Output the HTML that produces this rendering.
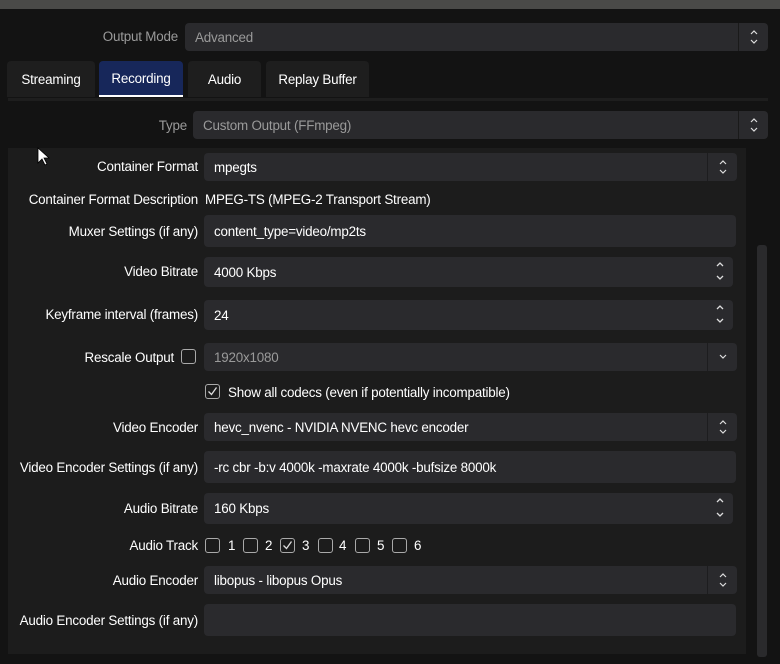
<!DOCTYPE html>
<html><head><meta charset="utf-8"><style>
*{box-sizing:border-box;margin:0;padding:0}
body{width:780px;height:664px;background:#131313;font-family:"Liberation Sans",sans-serif;font-size:13.4px;color:#fff;position:relative;overflow:hidden;letter-spacing:-0.2px}
div{position:absolute}
.top{left:0;top:0;width:780px;height:9px;background:#4a4a48}
.f{background:#2a2a2d;border-radius:4px;padding-left:10px;display:flex;align-items:center}
.lbl{text-align:right;white-space:nowrap}
.dim{color:#9a9a9a}
.sp{right:0;top:0;bottom:0;width:30px;border-left:1px solid #1d1d1f}
.tab{top:61px;height:36px;background:#1e1e1e;border-radius:4px 4px 0 0;display:flex;align-items:center;justify-content:center;font-size:13.4px}
.cb{width:15px;height:15px;border:1.5px solid #aaa;border-radius:3px}
svg{position:absolute}
</style></head><body>
<div class="top"></div>

<div class="lbl dim" style="right:602px;top:29px">Output Mode</div>
<div class="f dim" style="left:185px;top:23px;width:583px;height:28px">Advanced<div class="sp" style="border-left-color:#1a1a1a"><svg width="30" height="28"><path d="M12 11l3-3 3 3M12 17l3 3 3-3" stroke="#ddd" fill="none" stroke-width="1.2"/></svg></div></div>

<div class="tab" style="left:7px;width:88px">Streaming</div>
<div class="tab" style="left:99px;width:84px;background:#17275a;border-bottom:2px solid #fff">Recording</div>
<div class="tab" style="left:188px;width:73px">Audio</div>
<div class="tab" style="left:266px;width:103px">Replay Buffer</div>
<div style="left:8px;top:98px;width:760px;height:3px;background:#1e1e1e"></div>

<div class="lbl dim" style="right:593px;top:118px">Type</div>
<div class="f dim" style="left:193px;top:111px;width:575px;height:28px">Custom Output (FFmpeg)<div class="sp" style="border-left-color:#1a1a1a"><svg width="30" height="28"><path d="M12 11l3-3 3 3M12 17l3 3 3-3" stroke="#ddd" fill="none" stroke-width="1.2"/></svg></div></div>

<div style="left:8px;top:148px;width:738px;height:506px;background:#1c1c1c"></div>
<div style="left:757px;top:245px;width:10px;height:412px;background:#2a2a2c;border-radius:3px"></div>
<svg style="left:37px;top:147px" width="14" height="20"><path d="M1 1v15l4-4 3 6 2-1-3-6h5z" fill="#fff" stroke="#000" stroke-width=".8"/></svg>

<div class="lbl" style="right:582px;top:159px">Container Format</div>
<div class="f" style="left:204px;top:153px;width:533px;height:28px">mpegts<div class="sp"><svg width="30" height="28"><path d="M12 11l3-3 3 3M12 17l3 3 3-3" stroke="#ddd" fill="none" stroke-width="1.2"/></svg></div></div>

<div class="lbl" style="right:582px;top:192px">Container Format Description</div>
<div style="left:205px;top:192px">MPEG-TS (MPEG-2 Transport Stream)</div>

<div class="lbl" style="right:582px;top:224px">Muxer Settings (if any)</div>
<div class="f" style="left:204px;top:215px;width:532px;height:32px">content_type=video/mp2ts</div>

<div class="lbl" style="right:582px;top:264px">Video Bitrate</div>
<div class="f" style="left:204px;top:257px;width:529px;height:30px">4000 Kbps<svg style="right:0;top:0" width="24" height="30"><path d="M8 9l3-3 3 3M8 19l3 3 3-3" stroke="#ddd" fill="none" stroke-width="1.3"/></svg></div>

<div class="lbl" style="right:582px;top:307px">Keyframe interval (frames)</div>
<div class="f" style="left:204px;top:300px;width:529px;height:30px">24<svg style="right:0;top:0" width="24" height="30"><path d="M8 9l3-3 3 3M8 19l3 3 3-3" stroke="#ddd" fill="none" stroke-width="1.3"/></svg></div>

<div class="lbl" style="right:606px;top:350px">Rescale Output</div>
<div class="cb" style="left:181px;top:349px"></div>
<div class="f dim" style="left:204px;top:343px;width:533px;height:28px">1920x1080<div class="sp"><svg width="30" height="28"><path d="M12 12l3 3 3-3" stroke="#ddd" fill="none" stroke-width="1.2"/></svg></div></div>

<div class="cb" style="left:205px;top:384px"></div>
<svg style="left:205px;top:384px" width="15" height="15"><path d="M3.5 7.5l3 3 5-7" stroke="#ddd" fill="none" stroke-width="1.3"/></svg>
<div style="left:228px;top:385px">Show all codecs (even if potentially incompatible)</div>

<div class="lbl" style="right:582px;top:420px">Video Encoder</div>
<div class="f" style="left:204px;top:413px;width:533px;height:28px">hevc_nvenc - NVIDIA NVENC hevc encoder<div class="sp"><svg width="30" height="28"><path d="M12 11l3-3 3 3M12 17l3 3 3-3" stroke="#ddd" fill="none" stroke-width="1.2"/></svg></div></div>

<div class="lbl" style="right:582px;top:460px">Video Encoder Settings (if any)</div>
<div class="f" style="left:204px;top:451px;width:532px;height:32px">-rc cbr -b:v 4000k -maxrate 4000k -bufsize 8000k</div>

<div class="lbl" style="right:582px;top:501px">Audio Bitrate</div>
<div class="f" style="left:204px;top:493px;width:529px;height:31px">160 Kbps<svg style="right:0;top:0" width="24" height="31"><path d="M8 9l3-3 3 3M8 20l3 3 3-3" stroke="#ddd" fill="none" stroke-width="1.3"/></svg></div>

<div class="lbl" style="right:582px;top:538px">Audio Track</div>
<div class="cb" style="left:205px;top:538px"></div><div style="left:228px;top:538px">1</div>
<div class="cb" style="left:243px;top:538px"></div><div style="left:265px;top:538px">2</div>
<div class="cb" style="left:280px;top:538px"></div>
<svg style="left:280px;top:538px" width="15" height="15"><path d="M3.5 7.5l3 3 5-7" stroke="#ddd" fill="none" stroke-width="1.3"/></svg><div style="left:302px;top:538px">3</div>
<div class="cb" style="left:318px;top:538px"></div><div style="left:339px;top:538px">4</div>
<div class="cb" style="left:355px;top:538px"></div><div style="left:377px;top:538px">5</div>
<div class="cb" style="left:392px;top:538px"></div><div style="left:414px;top:538px">6</div>

<div class="lbl" style="right:582px;top:573px">Audio Encoder</div>
<div class="f" style="left:204px;top:566px;width:533px;height:28px">libopus - libopus Opus<div class="sp"><svg width="30" height="28"><path d="M12 11l3-3 3 3M12 17l3 3 3-3" stroke="#ddd" fill="none" stroke-width="1.2"/></svg></div></div>

<div class="lbl" style="right:582px;top:613px">Audio Encoder Settings (if any)</div>
<div class="f" style="left:204px;top:604px;width:532px;height:32px"></div>
</body></html>
